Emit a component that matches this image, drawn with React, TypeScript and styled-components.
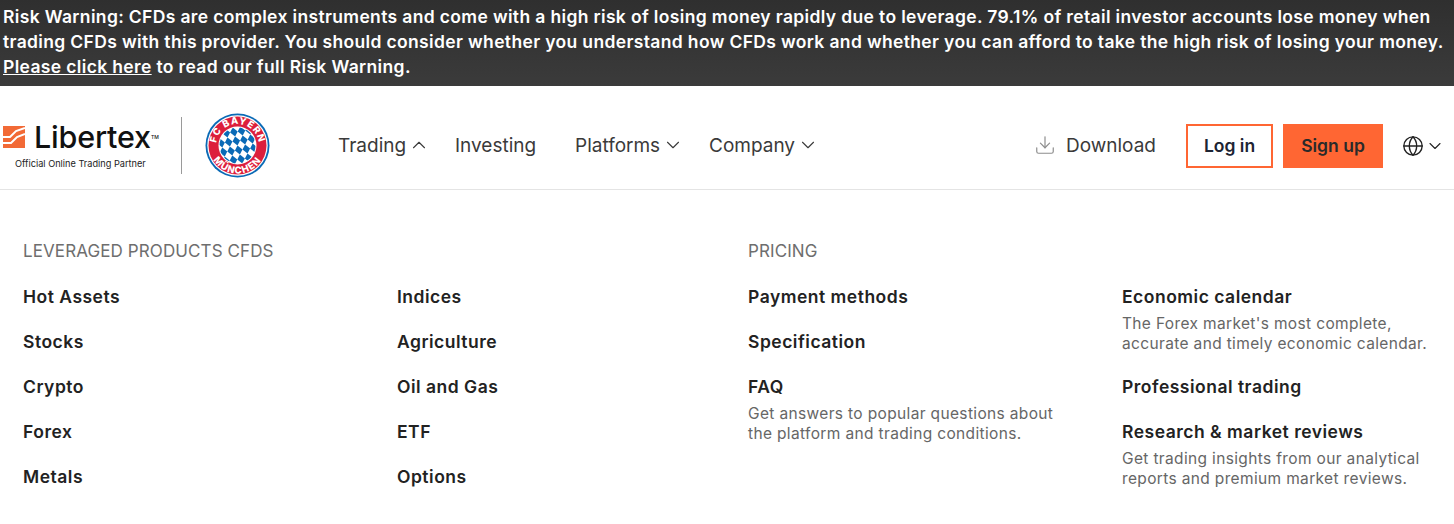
import styled, { createGlobalStyle } from "styled-components";
import { ChevronDown, ChevronUp, Globe, Download } from "lucide-react";

const GlobalStyle = createGlobalStyle`
  html, body {
    margin: 0;
    padding: 0;
    background: #ffffff;
    font-family: "Inter", "Liberation Sans", sans-serif;
    color: #1f1f1f;
  }
`;

const RiskBanner = styled.div`
  height: 86px;
  box-sizing: border-box;
  padding: 4px 0 0 3px;
  background: linear-gradient(#2f2f2f, #3b3b3b);
  color: #ffffff;
  font-size: 17.5px;
  font-weight: 600;
  letter-spacing: 0.35px;
  line-height: 25px;
  white-space: nowrap;

  a {
    color: #ffffff;
    text-decoration: underline;
  }
`;

const Header = styled.header`
  height: 104px;
  box-sizing: border-box;
  border-bottom: 1px solid #e4e4e4;
  display: flex;
  align-items: center;
  padding: 15px 9px 0 3px;
`;

const Brand = styled.div`
  display: flex;
  align-items: center;
  width: 335px;
`;

const LogoBlock = styled.div`
  width: 179px;
  display: flex;
  flex-direction: column;
  border-right: 1px solid #9a9a9a;
  height: 57px;
  justify-content: center;
  box-sizing: border-box;
`;

const LogoRow = styled.div`
  display: flex;
  align-items: center;
  gap: 9px;
  height: 30px;
`;

const LogoName = styled.span`
  font-size: 30.5px;
  font-weight: 500;
  letter-spacing: -0.2px;
  color: #111111;
  line-height: 30px;
  position: relative;

  sup {
    position: absolute;
    top: 0;
    right: -8px;
    font-size: 5px;
    letter-spacing: 0;
  }
`;

const Tagline = styled.div`
  font-size: 9.2px;
  color: #222222;
  margin: 6px 0 0 12px;
  white-space: nowrap;
`;

const Crest = styled.svg`
  margin-left: 23px;
  flex: none;
`;

const Nav = styled.nav`
  display: flex;
  align-items: center;
  flex: 1;
`;

const NavItem = styled.div<{ $width: number }>`
  width: ${(p) => p.$width}px;
  display: flex;
  align-items: center;
  gap: 2px;
  font-size: 19px;
  font-weight: 400;
  color: #3a3a3a;
  white-space: nowrap;
`;

const Actions = styled.div`
  display: flex;
  align-items: center;
  margin-top: 2px;
`;

const DownloadLink = styled.div`
  display: flex;
  align-items: center;
  gap: 10px;
  font-size: 19px;
  color: #3a3a3a;
  margin: 0 30px 2px 0;

  svg {
    color: #8d8d8d;
  }
`;

const LoginButton = styled.div`
  width: 87px;
  height: 44px;
  box-sizing: border-box;
  border: 2px solid #ff6633;
  padding-bottom: 2px;
  display: flex;
  align-items: center;
  justify-content: center;
  font-size: 17.5px;
  font-weight: 600;
  color: #1d2433;
`;

const SignupButton = styled(LoginButton)`
  width: 100px;
  margin-left: 10px;
  background: #ff6633;
  color: #2a2a2a;
`;

const LangPicker = styled.div`
  display: flex;
  align-items: center;
  gap: 1px;
  margin-left: 19px;
  color: #222222;
`;

const Panel = styled.div`
  display: grid;
  grid-template-columns: 374px 351px 374px 1fr;
  padding: 49px 0 0 23px;
`;

const Column = styled.div`
  display: flex;
  flex-direction: column;
`;

const GroupTitle = styled.div`
  height: 35px;
  font-size: 17px;
  letter-spacing: 0.1px;
  line-height: 25px;
  color: #6e6e6e;
  white-space: nowrap;
`;

const Item = styled.div`
  padding-top: 10px;
`;

const ItemTitle = styled.div`
  font-size: 17.5px;
  font-weight: 600;
  letter-spacing: 0.5px;
  line-height: 25px;
  padding-bottom: 10px;
  color: #222222;
  white-space: nowrap;
`;

const ItemText = styled.div`
  font-size: 15.5px;
  letter-spacing: 0.35px;
  line-height: 19.5px;
  color: #666666;
  margin-top: -5px;
  padding-bottom: 11px;
  white-space: nowrap;
`;

const columns = [
  {
    title: "LEVERAGED PRODUCTS CFDS",
    items: [{ name: "Hot Assets" }, { name: "Stocks" }, { name: "Crypto" }, { name: "Forex" }, { name: "Metals" }],
  },
  {
    title: "",
    items: [{ name: "Indices" }, { name: "Agriculture" }, { name: "Oil and Gas" }, { name: "ETF" }, { name: "Options" }],
  },
  {
    title: "PRICING",
    items: [
      { name: "Payment methods" },
      { name: "Specification" },
      { name: "FAQ", text: ["Get answers to popular questions about", "the platform and trading conditions."] },
    ],
  },
  {
    title: "",
    items: [
      { name: "Economic calendar", text: ["The Forex market's most complete,", "accurate and timely economic calendar."] },
      { name: "Professional trading" },
      { name: "Research & market reviews", text: ["Get trading insights from our analytical", "reports and premium market reviews."] },
    ],
  },
];

function LogoMark() {
  return (
    <svg width="22" height="22" viewBox="0 0 22 22">
      <rect width="22" height="22" fill="#f26a36" />
      <path d="M0 11 H7 L13 5 L22 2 M0 17 H8 L14 11 L22 8" stroke="#fff" strokeWidth="2" fill="none" />
    </svg>
  );
}

// blue half of the checkered lozenge field in the crest
function lozengePaths() {
  const paths = [];
  const [ux, uy, vx, vy] = [5, 4, -2.6, 5];
  for (let i = -7; i <= 7; i++) {
    for (let j = -7; j <= 7; j++) {
      if ((i + j) % 2 !== 0) continue;
      const x = 32.5 + i * ux + j * vx;
      const y = 32.5 + i * uy + j * vy;
      paths.push(
        <path
          key={`${i}-${j}`}
          d={`M${x} ${y} l${ux} ${uy} l${vx} ${vy} l${-ux} ${-uy} Z`}
          fill="#0a6ab6"
        />
      );
    }
  }
  return paths;
}

function BayernCrest() {
  return (
    <Crest width="65" height="65" viewBox="0 0 65 65">
      <defs>
        <clipPath id="inner">
          <circle cx="32.5" cy="32.5" r="18" />
        </clipPath>
        <path id="topArc" d="M11 32.5 A21.5 21.5 0 0 1 54 32.5" />
        <path id="bottomArc" d="M4.5 32.5 A28 28 0 0 0 60.5 32.5" />
      </defs>
      <circle cx="32.5" cy="32.5" r="32" fill="#0a6ab6" />
      <circle cx="32.5" cy="32.5" r="30.2" fill="#fff" />
      <circle cx="32.5" cy="32.5" r="29" fill="#dc1f3c" />
      <circle cx="32.5" cy="32.5" r="19" fill="#fff" />
      <g clipPath="url(#inner)">{lozengePaths()}</g>
      <text fontFamily="Inter, sans-serif" fontSize="9.5" fontWeight="800" fill="#fff" letterSpacing="0.9">
        <textPath href="#topArc" startOffset="50%" textAnchor="middle">FC BAYERN</textPath>
      </text>
      <text fontFamily="Inter, sans-serif" fontSize="9.5" fontWeight="800" fill="#fff" letterSpacing="1.1">
        <textPath href="#bottomArc" startOffset="50%" textAnchor="middle">MÜNCHEN</textPath>
      </text>
    </Crest>
  );
}

export default function App() {
  return (
    <>
      <GlobalStyle />
      <RiskBanner>
        Risk Warning: CFDs are complex instruments and come with a high risk of losing money rapidly due to leverage. 79.1% of retail investor accounts lose money when
        <br />
        trading CFDs with this provider. You should consider whether you understand how CFDs work and whether you can afford to take the high risk of losing your money.
        <br />
        <a href="#">Please click here</a> to read our full Risk Warning.
      </RiskBanner>
      <Header>
        <Brand>
          <LogoBlock>
            <LogoRow>
              <LogoMark />
              <LogoName>
                Libertex<sup>TM</sup>
              </LogoName>
            </LogoRow>
            <Tagline>Official Online Trading Partner</Tagline>
          </LogoBlock>
          <BayernCrest />
        </Brand>
        <Nav>
          <NavItem $width={117}>
            Trading <ChevronUp size={22} strokeWidth={1.2} />
          </NavItem>
          <NavItem $width={120}>Investing</NavItem>
          <NavItem $width={134}>
            Platforms <ChevronDown size={22} strokeWidth={1.2} />
          </NavItem>
          <NavItem $width={130}>
            Company <ChevronDown size={22} strokeWidth={1.2} />
          </NavItem>
        </Nav>
        <Actions>
          <DownloadLink>
            <Download size={22} strokeWidth={1.3} />
            Download
          </DownloadLink>
          <LoginButton>Log in</LoginButton>
          <SignupButton>Sign up</SignupButton>
          <LangPicker>
            <Globe size={22} strokeWidth={1.5} />
            <ChevronDown size={20} strokeWidth={1.3} />
          </LangPicker>
        </Actions>
      </Header>
      <Panel>
        {columns.map((column, i) => (
          <Column key={i}>
            <GroupTitle>{column.title}</GroupTitle>
            {column.items.map((item) => (
              <Item key={item.name}>
                <ItemTitle>{item.name}</ItemTitle>
                {item.text && (
                  <ItemText>
                    {item.text.map((line) => (
                      <div key={line}>{line}</div>
                    ))}
                  </ItemText>
                )}
              </Item>
            ))}
          </Column>
        ))}
      </Panel>
    </>
  );
}
